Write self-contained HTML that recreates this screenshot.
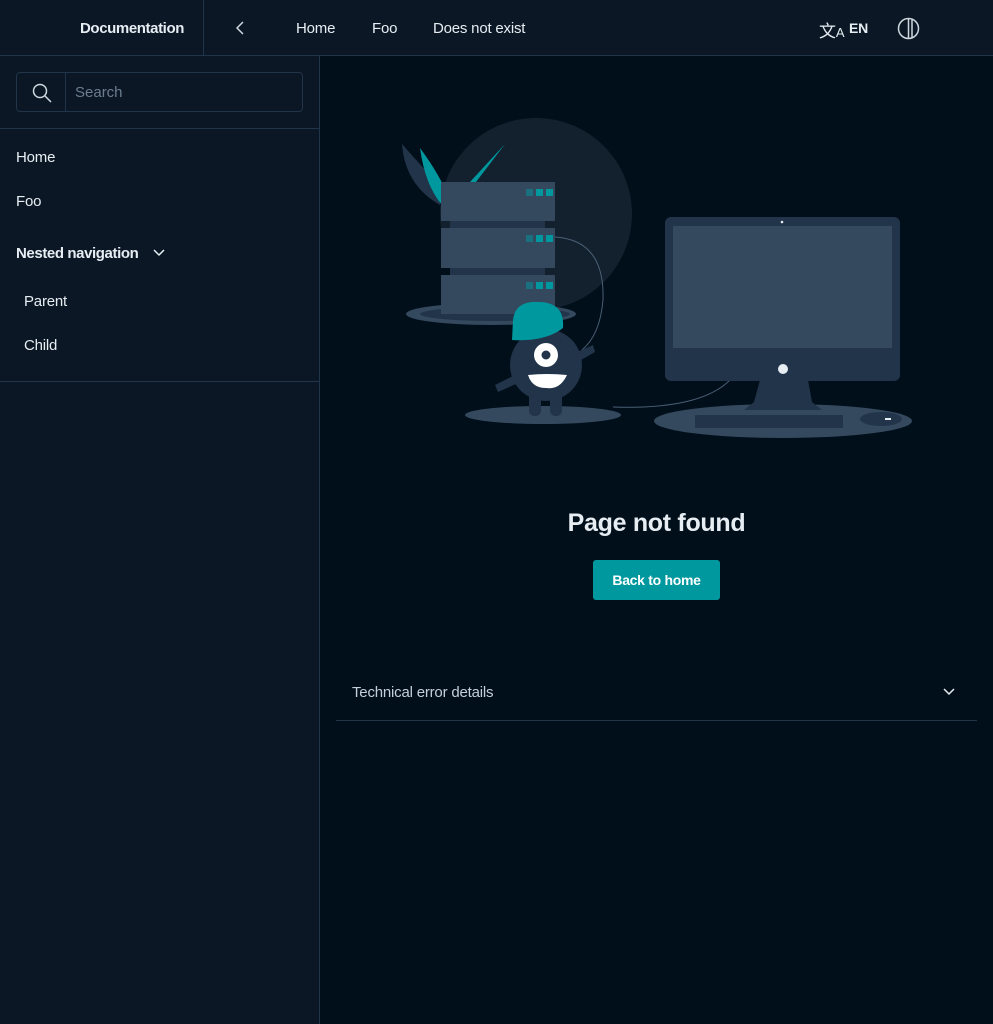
<!DOCTYPE html>
<html><head><meta charset="utf-8"><style>
*{box-sizing:border-box;margin:0;padding:0}
body{width:993px;height:1024px;background:#000f1a;font-family:"Liberation Sans",sans-serif;color:#e6edf3;overflow:hidden;position:relative}
.hdr{position:absolute;left:0;top:0;width:993px;height:56px;background:#0b1724;border-bottom:1px solid #22344a}
.hdr .t{position:absolute;font-size:15px;top:20px;letter-spacing:-0.2px}
.side{position:absolute;left:0;top:56px;width:320px;height:968px;background:#0b1724;border-right:1px solid #22344a}
.search{position:absolute;left:16px;top:16px;width:287px;height:40px;border:1px solid #22344a;border-radius:4px}
.search .d{position:absolute;left:48px;top:0;height:38px;border-left:1px solid #22344a}
.nav{position:absolute;font-size:15px;letter-spacing:-0.2px}
</style></head><body>
<div class="hdr">
 <div class="t" style="left:80px;font-weight:bold;letter-spacing:-0.4px">Documentation</div>
 <div style="position:absolute;left:203px;top:0;height:55px;border-left:1px solid #22344a"></div>
 <svg style="position:absolute;left:233px;top:20px" width="14" height="16"><path d="M10 2 L4 8 L10 14" fill="none" stroke="#cfd8e0" stroke-width="1.5"/></svg>
 <div class="t" style="left:296px">Home</div>
 <div class="t" style="left:372px">Foo</div>
 <div class="t" style="left:433px">Does not exist</div>
 <div class="t" style="left:819px;top:17px;font-size:17px">文<span style="font-size:13px">A</span></div>
 <div class="t" style="left:849px;font-weight:bold;font-size:14px;top:20px">EN</div>
 <svg style="position:absolute;left:897px;top:17px" width="23" height="23"><circle cx="11.5" cy="11.5" r="10" fill="none" stroke="#cfd8e0" stroke-width="1.5"/><path d="M11.5 1.5V21.5M15 2.5V20.5" stroke="#cfd8e0" stroke-width="1.5"/></svg>
</div>
<div class="side">
 <div class="search"><svg style="position:absolute;left:14px;top:9px" width="22" height="22"><circle cx="9" cy="9" r="6.5" fill="none" stroke="#cfd8e0" stroke-width="1.5"/><path d="M14 14L20 20" stroke="#cfd8e0" stroke-width="1.5"/></svg><div class="d"></div><div style="position:absolute;left:58px;top:11px;font-size:15px;color:#6b7d8f">Search</div></div>
 <div style="position:absolute;left:0;top:72px;width:319px;border-top:1px solid #22344a"></div>
 <div class="nav" style="left:16px;top:93px">Home</div>
 <div class="nav" style="left:16px;top:137px">Foo</div>
 <div class="nav" style="left:16px;top:189px;font-weight:bold;letter-spacing:-0.4px">Nested navigation</div>
 <svg style="position:absolute;left:152px;top:191px" width="14" height="12"><path d="M2 3L7 8L12 3" fill="none" stroke="#e6edf3" stroke-width="1.5"/></svg>
 <div class="nav" style="left:24px;top:237px">Parent</div>
 <div class="nav" style="left:24px;top:281px">Child</div>
 <div style="position:absolute;left:0;top:325px;width:319px;border-top:1px solid #22344a"></div>
</div>
<svg style="position:absolute;left:0;top:0" width="993" height="460">
 <circle cx="536" cy="214" r="96" fill="#13212f"/>
 <path d="M402 144 Q405 185 440 205 L440 185 Q420 165 402 144Z" fill="#22344a"/>
 <path d="M420 148 Q425 185 442 205 L450 200 Q440 175 420 148Z" fill="#00989f"/>
 <path d="M505 144 L470 182 L476 182Z" fill="#00989f"/>
 <ellipse cx="491" cy="314" rx="85" ry="11" fill="#34495e"/>
 <ellipse cx="495" cy="314" rx="75" ry="7" fill="#22344a"/>
 <rect x="450" y="215" width="95" height="100" fill="#22344a"/>
 <g fill="#34495e"><rect x="441" y="182" width="114" height="39"/><rect x="441" y="228" width="114" height="40"/><rect x="441" y="275" width="114" height="39"/></g>
 <g fill="#00989f"><rect x="526" y="189" width="7" height="7" opacity=".5"/><rect x="536" y="189" width="7" height="7"/><rect x="546" y="189" width="7" height="7"/>
 <rect x="526" y="235" width="7" height="7" opacity=".5"/><rect x="536" y="235" width="7" height="7"/><rect x="546" y="235" width="7" height="7"/>
 <rect x="526" y="282" width="7" height="7" opacity=".5"/><rect x="536" y="282" width="7" height="7"/><rect x="546" y="282" width="7" height="7"/></g>
 <path d="M555 237 Q605 240 603 300 Q600 335 582 350" fill="none" stroke="#4a5f75" stroke-width="1"/>
 <path d="M613 407 Q700 410 730 380" fill="none" stroke="#4a5f75" stroke-width="1"/>
 <ellipse cx="543" cy="415" rx="78" ry="9" fill="#34495e"/>
 <rect x="529" y="390" width="12" height="26" rx="5" fill="#22344a"/><rect x="550" y="390" width="12" height="26" rx="5" fill="#22344a"/>
 <path d="M495 385 L525 370 L525 380 L498 392Z" fill="#22344a"/>
 <path d="M570 355 L593 345 L595 352 L572 365Z" fill="#22344a"/>
 <circle cx="546" cy="365" r="36" fill="#22344a"/>
 <path d="M513 320 Q515 300 540 302 Q565 303 563 328 Q545 342 512 340Z" fill="#00989f"/>
 <circle cx="546" cy="355" r="12" fill="#fff"/><circle cx="546" cy="355" r="4.5" fill="#22344a"/>
 <path d="M528 375 Q547 373 567 375 Q560 390 546 388 Q532 388 528 375Z" fill="#fff"/>
 <ellipse cx="783" cy="421" rx="129" ry="17" fill="#34495e"/>
 <path d="M760 380 L808 380 L812 402 L822 410 L744 410 L754 402Z" fill="#22344a"/>
 <rect x="665" y="217" width="235" height="164" rx="6" fill="#22344a"/>
 <rect x="673" y="226" width="219" height="122" fill="#34495e"/>
 <circle cx="783" cy="369" r="5" fill="#e6edf3"/><circle cx="782" cy="222" r="1.3" fill="#e6edf3"/>
 <rect x="695" y="415" width="148" height="13" fill="#22344a"/>
 <ellipse cx="881" cy="419" rx="21" ry="7" fill="#22344a"/><rect x="885" y="418" width="6" height="2" fill="#e6edf3"/>
</svg>
<div style="position:absolute;left:320px;width:673px;top:509px;text-align:center;font-size:25px;font-weight:bold;letter-spacing:-0.3px">Page not found</div>
<div style="position:absolute;left:593px;top:560px;width:127px;height:40px;background:#00989f;border-radius:3px;color:#fff;font-weight:bold;font-size:14px;text-align:center;line-height:40px;letter-spacing:-0.3px">Back to home</div>
<div style="position:absolute;left:352px;top:684px;font-size:15px;color:#c5cfd8;letter-spacing:-0.2px">Technical error details</div>
<svg style="position:absolute;left:942px;top:686px" width="14" height="12"><path d="M2 3L7 8L12 3" fill="none" stroke="#e6edf3" stroke-width="1.5"/></svg>
<div style="position:absolute;left:336px;top:720px;width:641px;border-top:1px solid #22344a"></div>
</body></html>
